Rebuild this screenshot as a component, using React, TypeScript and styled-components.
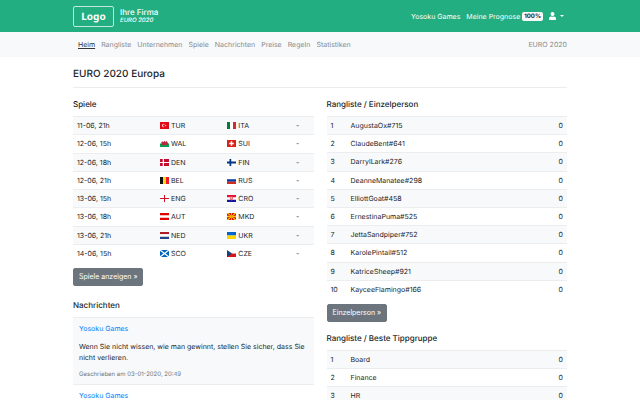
import React from "react";
import styled, { createGlobalStyle } from "styled-components";

const GlobalStyle = createGlobalStyle`
  *, *::before, *::after { box-sizing: border-box; }
  body {
    margin: 0;
    background: #fff;
    color: #212529;
    font-family: Inter, "Liberation Sans", sans-serif;
    font-size: 7px;
    line-height: 11px;
    text-rendering: geometricPrecision;
  }
  h1, h2, p, ul { margin: 0; padding: 0; }
  a { color: inherit; text-decoration: none; }
`;

const Page = styled.div`
  height: 100vh;
  overflow: hidden;
`;

const Container = styled.div`
  width: 100%;
  max-width: 508px;
  margin: 0 auto;
  padding: 0 7px;
`;

const Header = styled.header`
  background: #22ae80;
  color: #fff;
`;

const HeaderRow = styled(Container)`
  display: flex;
  align-items: center;
  height: 32px;
`;

const Brand = styled.a`
  display: flex;
  align-items: center;
  gap: 6px;
`;

const Logo = styled.span`
  width: 41px;
  height: 21px;
  border: 1px solid #c3eadd;
  border-radius: 2px;
  font: 700 10px/18px "Noto Sans", sans-serif;
  text-align: center;
`;

const Company = styled.span`
  display: block;
  font-size: 8px;
  font-weight: 500;
  line-height: 9px;
`;

const Tournament = styled.em`
  display: block;
  font-size: 6px;
  font-weight: 500;
  line-height: 8px;
`;

const AccountLinks = styled.nav`
  display: flex;
  align-items: center;
  gap: 6px;
  margin-left: auto;
  padding-right: 3px;
`;

const AccountLink = styled.a`
  display: flex;
  align-items: center;
  gap: 2px;
`;

const Badge = styled.span`
  padding: 0 2px;
  border-radius: 2px;
  background: #f8f9fa;
  color: #212529;
  font-size: 6px;
  font-weight: 700;
  line-height: 9px;
`;

const UserButton = styled.button`
  display: flex;
  align-items: center;
  gap: 4px;
  padding: 0;
  border: 0;
  background: none;
  color: #fff;
`;

const NavBar = styled.nav`
  background: #f8f9fb;
  color: #868a8e;
`;

const NavRow = styled(Container)`
  display: flex;
  align-items: center;
  justify-content: space-between;
  height: 25px;
`;

const NavList = styled.ul`
  display: flex;
  gap: 6px;
  padding-left: 5px;
  list-style: none;
`;

const NavLink = styled.a<{ $active?: boolean }>`
  color: ${(p) => (p.$active ? "#343638" : "#868a8e")};
  text-decoration: ${(p) => (p.$active ? "underline" : "none")};
`;

const Title = styled.h1`
  padding: 9px 0 5px;
  border-bottom: 1px solid #ececed;
  font-size: 10px;
  font-weight: 500;
  line-height: 16px;
`;

const Columns = styled.div`
  display: grid;
  grid-template-columns: 1fr 1fr;
  gap: 13px;
  padding-top: 11px;
`;

const Heading = styled.h2`
  margin-bottom: 6px;
  font-size: 8px;
  font-weight: 500;
  line-height: 11px;
`;

const Table = styled.table<{ $height?: number }>`
  width: 100%;
  height: ${(p) => (p.$height ? p.$height + "px" : "auto")};
  border-spacing: 0;
  table-layout: fixed;
`;

const Row = styled.tr`
  &:nth-child(odd) { background: #f8f9fa; }
`;

const Cell = styled.td<{ $width?: string; $align?: string }>`
  width: ${(p) => p.$width ?? "auto"};
  height: 18px;
  padding: 2px 4px;
  border-top: 1px solid #ebedef;
  text-align: ${(p) => p.$align ?? "left"};
  vertical-align: middle;
`;

const Team = styled.span`
  display: flex;
  align-items: center;
  gap: 2px;
`;

const FlagSvg = styled.svg`
  display: block;
  width: 9px;
  height: 7px;
`;

const Button = styled.button`
  display: block;
  margin: 6px 0 11px;
  padding: 3px 5px;
  border: 1px solid #6c757d;
  border-radius: 2px;
  background: #6c757d;
  color: #fff;
  font: inherit;
  line-height: 10px;
`;

const NewsHeading = styled(Heading)`
  margin-top: 14px;
`;

const NewsItem = styled.article<{ $shaded?: boolean }>`
  display: grid;
  gap: 7px;
  padding: 5px 6px 4px;
  border-top: 1px solid #ebedef;
  background: ${(p) => (p.$shaded ? "#f8f9fa" : "#fff")};
`;

const NewsLink = styled.a`
  color: #007bff;
`;

const NewsDate = styled.small`
  color: #6c757d;
  font-size: 6px;
  line-height: 10px;
`;

const flags: Record<string, React.ReactNode> = {
  TUR: (
    <>
      <path fill="#e30a17" d="M0 0h36v28H0z" />
      <circle cx="15" cy="14" r="7" fill="#fff" />
      <circle cx="17" cy="14" r="5.5" fill="#e30a17" />
      <path fill="#fff" d="m19 14 7-3-2 3 2 3z" />
    </>
  ),
  ITA: <><path fill="#fff" d="M0 0h36v28H0z" /><path fill="#087b38" d="M0 0h12v28H0z" /><path fill="#ce2b37" d="M24 0h12v28H24z" /></>,
  WAL: (
    <>
      <path fill="#fff" d="M0 0h36v14H0z" />
      <path fill="#00a650" d="M0 14h36v14H0z" />
      <path fill="#b8283c" d="m5 9 4-4 4 4 5-6 3 5 6-4 4 7 2 6-5 4-5-3-5 4-5-3-6 3-4-4 4-3z" />
    </>
  ),
  SUI: <><path fill="#d9241b" d="M0 0h36v28H0z" /><path fill="#fff" d="M15 5h6v6h6v6h-6v6h-6v-6H9v-6h6z" /></>,
  DEN: <><path fill="#c60c30" d="M0 0h36v28H0z" /><path fill="#fff" d="M11 0h5v12h20v4H16v12h-5V16H0v-4h11z" /></>,
  FIN: <><path fill="#fff" d="M0 0h36v28H0z" /><path fill="#003580" d="M10 0h7v10h19v8H17v10h-7V18H0v-8h10z" /></>,
  BEL: <><path fill="#111" d="M0 0h12v28H0z" /><path fill="#ffd90c" d="M12 0h12v28H12z" /><path fill="#f31830" d="M24 0h12v28H24z" /></>,
  RUS: <><path fill="#fff" d="M0 0h36v9H0z" /><path fill="#0039a6" d="M0 9h36v10H0z" /><path fill="#d52b1e" d="M0 19h36v9H0z" /></>,
  ENG: <><path fill="#fff" d="M0 0h36v28H0z" /><path fill="#ce1124" d="M16 0h4v12h16v4H20v12h-4V16H0v-4h16z" /></>,
  CRO: (
    <>
      <path fill="#fff" d="M0 0h36v28H0z" />
      <path fill="#e8112d" d="M0 0h36v9H0z" />
      <path fill="#171796" d="M0 19h36v9H0z" />
      <path fill="#e8596a" d="M12 6h12v11l-6 5-6-5z" />
      <path fill="#fff" d="M15 8h3v4h-3zM18 12h3v4h-3z" />
    </>
  ),
  AUT: <><path fill="#df0000" d="M0 0h36v28H0z" /><path fill="#fff" d="M0 9h36v10H0z" /></>,
  MKD: (
    <>
      <path fill="#d20000" d="M0 0h36v28H0z" />
      <path fill="#ffd000" d="M0 0h6l12 12L30 0h6v2L22 13l14-3v8l-14-3 14 11v2h-6L18 16 6 28H0v-2l14-11-14 3v-8l14 3L0 2zM15 0h6l-3 11zM15 28h6l-3-11z" />
      <circle cx="18" cy="14" r="5" fill="#f5a800" />
    </>
  ),
  NED: <><path fill="#ae1c28" d="M0 0h36v9H0z" /><path fill="#fff" d="M0 9h36v10H0z" /><path fill="#21468b" d="M0 19h36v9H0z" /></>,
  UKR: <><path fill="#0066cc" d="M0 0h36v14H0z" /><path fill="#ffd500" d="M0 14h36v14H0z" /></>,
  SCO: <><path fill="#0065bd" d="M0 0h36v28H0z" /><path stroke="#fff" strokeWidth="5" d="m0 0 36 28M36 0 0 28" /></>,
  CZE: <><path fill="#fff" d="M0 0h36v14H0z" /><path fill="#d7141a" d="M0 14h36v14H0z" /><path fill="#11457e" d="m0 0 20 14L0 28z" /></>,
};

const matches = [
  ["11-06, 21h", "TUR", "ITA"],
  ["12-06, 15h", "WAL", "SUI"],
  ["12-06, 18h", "DEN", "FIN"],
  ["12-06, 21h", "BEL", "RUS"],
  ["13-06, 15h", "ENG", "CRO"],
  ["13-06, 18h", "AUT", "MKD"],
  ["13-06, 21h", "NED", "UKR"],
  ["14-06, 15h", "SCO", "CZE"],
];

const players = [
  "AugustaOx#715", "ClaudeBent#641", "DarrylLark#276", "DeanneManatee#298", "ElliottGoat#458",
  "ErnestinaPuma#525", "JettaSandpiper#752", "KarolePintail#512", "KatriceSheep#921", "KayceeFlamingo#166",
];

const groups = ["Board", "Finance", "HR"];

const navItems = ["Heim", "Rangliste", "Unternehmen", "Spiele", "Nachrichten", "Preise", "Regeln", "Statistiken"];

function TeamLabel({ code }: { code: string }) {
  return (
    <Team>
      <FlagSvg viewBox="0 0 36 28" preserveAspectRatio="none" aria-hidden="true">{flags[code]}</FlagSvg>
      {code}
    </Team>
  );
}

function Ranking({ names, height }: { names: string[]; height?: number }) {
  return (
    <Table $height={height}>
      <tbody>
        {names.map((name, i) => (
          <Row key={name}>
            <Cell $width="20px">{i + 1}</Cell>
            <Cell>{name}</Cell>
            <Cell $width="20px" $align="right">0</Cell>
          </Row>
        ))}
      </tbody>
    </Table>
  );
}

export default function App() {
  return (
    <Page>
      <GlobalStyle />
      <Header>
        <HeaderRow>
          <Brand href="#">
            <Logo>Logo</Logo>
            <span>
              <Company>Ihre Firma</Company>
              <Tournament>EURO 2020</Tournament>
            </span>
          </Brand>
          <AccountLinks>
            <AccountLink href="#">Yosoku Games</AccountLink>
            <AccountLink href="#">Meine Prognose <Badge>100%</Badge></AccountLink>
            <UserButton aria-label="Konto">
              <svg width="7" height="8" viewBox="0 0 448 512" fill="currentColor" aria-hidden="true">
                <path d="M224 256a128 128 0 1 0 0-256 128 128 0 0 0 0 256zm90 32h-17a174 174 0 0 1-146 0h-17C60 288 0 348 0 422v42c0 27 21 48 48 48h352c27 0 48-21 48-48v-42c0-74-60-134-134-134z" />
              </svg>
              <svg width="4" height="2" viewBox="0 0 4 2" fill="currentColor" aria-hidden="true">
                <path d="M0 0h4L2 2z" />
              </svg>
            </UserButton>
          </AccountLinks>
        </HeaderRow>
      </Header>
      <NavBar>
        <NavRow>
          <NavList>
            {navItems.map((item, i) => (
              <li key={item}><NavLink href="#" $active={i === 0}>{item}</NavLink></li>
            ))}
          </NavList>
          <span>EURO 2020</span>
        </NavRow>
      </NavBar>
      <Container as="main">
        <Title>EURO 2020 Europa</Title>
        <Columns>
          <section>
            <Heading>Spiele</Heading>
            <Table $height={146}>
              <tbody>
                {matches.map(([date, home, away]) => (
                  <Row key={home}>
                    <Cell $width="83px">{date}</Cell>
                    <Cell $width="28%"><TeamLabel code={home} /></Cell>
                    <Cell><TeamLabel code={away} /></Cell>
                    <Cell $width="32px" $align="center">-</Cell>
                  </Row>
                ))}
              </tbody>
            </Table>
            <Button>Spiele anzeigen »</Button>
            <NewsHeading>Nachrichten</NewsHeading>
            <NewsItem $shaded>
              <NewsLink href="#">Yosoku Games</NewsLink>
              <p>Wenn Sie nicht wissen, wie man gewinnt, stellen Sie sicher, dass Sie nicht verlieren.</p>
              <NewsDate>Geschrieben am 03-01-2020, 20:49</NewsDate>
            </NewsItem>
            <NewsItem>
              <NewsLink href="#">Yosoku Games</NewsLink>
            </NewsItem>
          </section>
          <section>
            <Heading>Rangliste / Einzelperson</Heading>
            <Ranking names={players} height={182} />
            <Button>Einzelperson »</Button>
            <Heading>Rangliste / Beste Tippgruppe</Heading>
            <Ranking names={groups} />
          </section>
        </Columns>
      </Container>
    </Page>
  );
}
